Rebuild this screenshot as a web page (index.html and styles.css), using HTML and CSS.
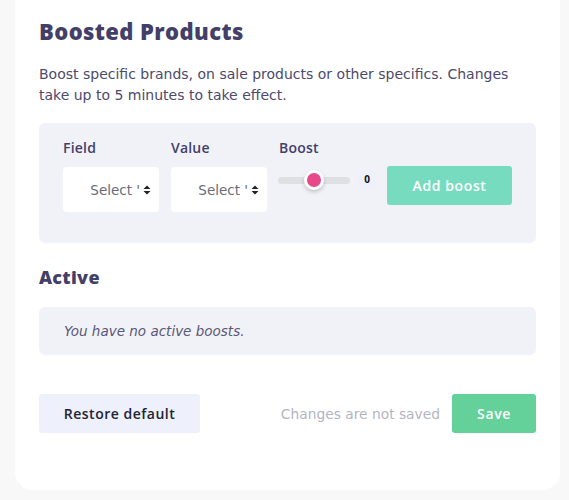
FILE: index.html
```html
<!DOCTYPE html>
<html>
<head>
<meta charset="utf-8">
<link rel="stylesheet" href="styles.css">
</head>
<body>
<div class="card">
  <h1 class="title">Boosted Products</h1>
  <p class="desc">Boost specific brands, on sale products or other specifics. Changes take up to 5 minutes to take effect.</p>
  <div class="panel">
    <div class="field">
      <div class="label">Field</div>
      <div class="select"><span class="sel-text">Select '</span><svg class="arrows" width="8" height="10" viewBox="0 0 8 10"><path d="M4 0.5 L7.5 4 H0.5 Z M4 9.5 L7.5 6 H0.5 Z" fill="#222"/></svg></div>
    </div>
    <div class="field">
      <div class="label">Value</div>
      <div class="select"><span class="sel-text">Select '</span><svg class="arrows" width="8" height="10" viewBox="0 0 8 10"><path d="M4 0.5 L7.5 4 H0.5 Z M4 9.5 L7.5 6 H0.5 Z" fill="#222"/></svg></div>
    </div>
    <div class="field boost">
      <div class="label">Boost</div>
      <div class="boost-row">
        <div class="slider"><div class="thumb"></div></div>
        <div class="num">0</div>
      </div>
    </div>
    <button class="add">Add boost</button>
  </div>
  <h2 class="sub">Active</h2>
  <div class="empty">You have no active boosts.</div>
  <div class="footer">
    <button class="restore">Restore default</button>
    <span class="status">Changes are not saved</span>
    <button class="save">Save</button>
  </div>
</div>
</body>
</html>
```
FILE: styles.css
```css
* { box-sizing: border-box; }
body {
  margin: 0;
  background: #f8f8f8;
  font-family: "Open Sans", "Noto Sans", sans-serif;
  color: #433f68;
}
.card {
  margin: 0 9px 10px 15px;
  background: #fff;
  border-radius: 0 0 18px 18px;
  padding: 16px 24px 57px 24px;
}
.title {
  margin: 0;
  font-size: 22px;
  line-height: 30px;
  font-weight: 800;
  color: #433f68;
  letter-spacing: 0.4px;
}
.desc {
  margin: 18px 0 0;
  font-family: "DejaVu Sans", sans-serif;
  font-size: 14px;
  line-height: 21px;
  color: #4d4a6b;
}
.panel {
  margin-top: 17px;
  background: #f1f2f8;
  border-radius: 6px;
  padding: 16px 24px 31px 24px;
  display: flex;
  align-items: flex-start;
}
.field { display: flex; flex-direction: column; margin-right: 12px; }
.label {
  font-size: 14px;
  font-weight: 600;
  line-height: 18px;
  color: #433f68;
  margin-bottom: 10px;
  letter-spacing: 0.2px;
}
.select {
  width: 96px;
  height: 45px;
  background: #fff;
  border-radius: 4px;
  display: flex;
  align-items: center;
  justify-content: flex-end;
  padding-right: 8px;
  overflow: hidden;
}
.sel-text { font-family: "DejaVu Sans", sans-serif; font-size: 13.5px; color: #6b6c7a; margin-right: 3px; white-space: nowrap; }
.arrows { flex: none; }
.boost { margin-right: 0; }
.boost-row { display: flex; align-items: center; height: 30px; margin-top: -2px; }
.slider {
  position: relative;
  width: 72px;
  height: 7px;
  border-radius: 4px;
  background: #dfe0e4;
  margin-left: -1px;
}
.thumb {
  position: absolute;
  left: 26px;
  top: -7px;
  width: 20px;
  height: 20px;
  border-radius: 50%;
  background: #e8488a;
  border: 3px solid #fff;
  box-shadow: 0 2px 4px rgba(0,0,0,0.2);
}
.num {
  margin-left: 8px;
  width: 18px;
  height: 18px;
  background: #eef0fc;
  font-size: 10px;
  font-weight: 700;
  color: #111;
  display: flex;
  align-items: center;
  justify-content: center;
  margin-top: -2px;
}
.add {
  margin-top: 27px;
  margin-left: 11px;
  width: 125px;
  height: 39px;
  border: none;
  border-radius: 3px;
  background: #77dcbf;
  color: #fff;
  font-family: inherit;
  font-size: 14px;
  font-weight: 600;
  letter-spacing: 0.6px;
}
.sub {
  margin: 22px 0 0;
  font-size: 18px;
  line-height: 24px;
  font-weight: 800;
  color: #433f68;
  letter-spacing: 0.3px;
}
.empty {
  margin-top: 18px;
  background: #f1f2f8;
  border-radius: 6px;
  height: 48px;
  padding-left: 25px;
  display: flex;
  align-items: center;
  font-family: "DejaVu Sans", sans-serif;
  font-style: italic;
  font-size: 13.5px;
  color: #5a5777;
}
.footer {
  margin-top: 39px;
  display: flex;
  align-items: center;
}
.restore {
  width: 161px;
  height: 39px;
  border: none;
  border-radius: 3px;
  background: #eef0fc;
  color: #222433;
  font-family: inherit;
  font-size: 14px;
  font-weight: 600;
  letter-spacing: 0.5px;
}
.status {
  margin-left: auto;
  font-family: "DejaVu Sans", sans-serif;
  font-size: 13.8px;
  color: #b5b5c1;
}
.save {
  margin-left: 12px;
  width: 84px;
  height: 39px;
  border: none;
  border-radius: 3px;
  background: #64d09a;
  color: #fff;
  font-family: inherit;
  font-size: 14px;
  font-weight: 600;
  letter-spacing: 0.6px;
}
```
